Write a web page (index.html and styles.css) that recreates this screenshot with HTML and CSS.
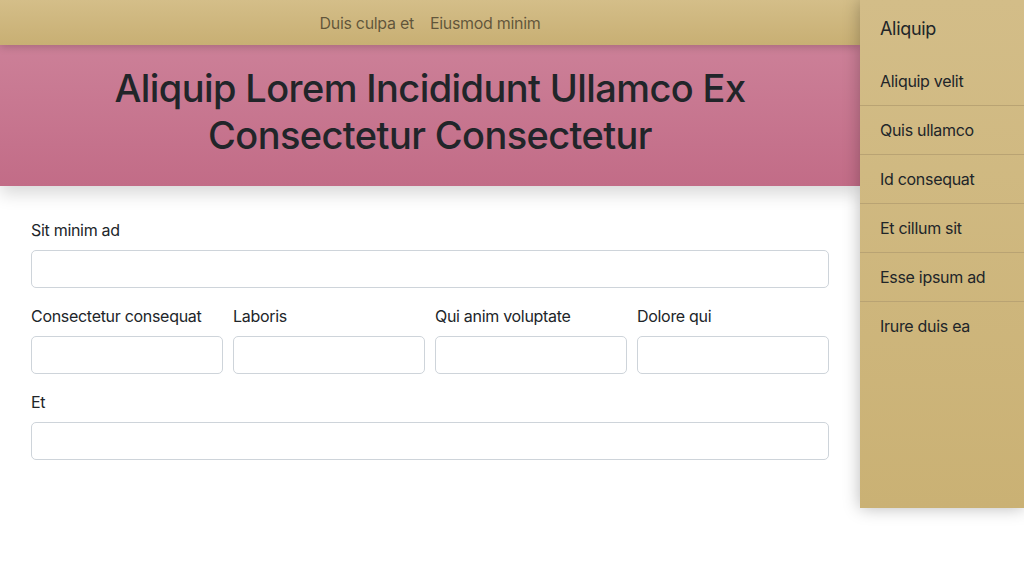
FILE: index.html
```html
<!DOCTYPE html>
<html lang="en">
<head>
<meta charset="utf-8">
<title>Aliquip</title>
<link rel="stylesheet" href="styles.css">
</head>
<body>
<div class="app">
  <div class="main">
    <nav class="topnav">
      <a class="topnav-link">Duis culpa et</a>
      <a class="topnav-link">Eiusmod minim</a>
    </nav>
    <header class="hero">
      <h1 class="hero-title">Aliquip Lorem Incididunt Ullamco Ex Consectetur Consectetur</h1>
    </header>
    <form class="form">
      <div class="field">
        <label class="label">Sit minim ad</label>
        <input class="input" type="text">
      </div>
      <div class="row">
        <div class="field">
          <label class="label">Consectetur consequat</label>
          <input class="input" type="text">
        </div>
        <div class="field">
          <label class="label">Laboris</label>
          <input class="input" type="text">
        </div>
        <div class="field">
          <label class="label">Qui anim voluptate</label>
          <input class="input" type="text">
        </div>
        <div class="field">
          <label class="label">Dolore qui</label>
          <input class="input" type="text">
        </div>
      </div>
      <div class="field">
        <label class="label">Et</label>
        <input class="input" type="text">
      </div>
    </form>
  </div>
  <aside class="sidebar">
    <div class="sidebar-title">Aliquip</div>
    <ul class="sidebar-list">
      <li class="sidebar-item">Aliquip velit</li>
      <li class="sidebar-item">Quis ullamco</li>
      <li class="sidebar-item">Id consequat</li>
      <li class="sidebar-item">Et cillum sit</li>
      <li class="sidebar-item">Esse ipsum ad</li>
      <li class="sidebar-item">Irure duis ea</li>
    </ul>
  </aside>
</div>
</body>
</html>
```

FILE: styles.css
```css
* { box-sizing: border-box; }
html, body { margin: 0; padding: 0; }
body {
  font-family: Inter, "Noto Sans", sans-serif;
  color: #212529;
  background: #fff;
  font-size: 16px;
  line-height: 1.5;
  letter-spacing: -0.3px;
}
.app {
  display: flex;
  align-items: flex-start;
  width: 1024px;
  height: 566px;
  overflow: hidden;
}
.main {
  flex: 0 0 860px;
  width: 860px;
}
.topnav {
  position: relative;
  z-index: 2;
  height: 45px;
  display: flex;
  justify-content: center;
  align-items: center;
  gap: 16px;
  background: linear-gradient(#d4be89, #c8af73);
  box-shadow: 0 2px 8px rgba(0, 0, 0, 0.18);
}
.topnav-link {
  color: rgba(0, 0, 0, 0.55);
  font-size: 16px;
}
.hero {
  position: relative;
  z-index: 1;
  height: 141px;
  padding-bottom: 8px;
  display: flex;
  align-items: center;
  justify-content: center;
  background: linear-gradient(#cc8098, #c26c87);
  box-shadow: 0 8px 16px rgba(0, 0, 0, 0.15);
}
.hero-title {
  margin: 0;
  max-width: 720px;
  text-align: center;
  font-size: 38px;
  font-weight: 500;
  letter-spacing: -0.6px;
  line-height: 47px;
  color: #212529;
}
.form {
  padding: 32px 31px 0;
  display: flex;
  flex-direction: column;
  gap: 16px;
}
.row {
  display: grid;
  grid-template-columns: repeat(4, 1fr);
  gap: 10px;
}
.field {
  display: flex;
  flex-direction: column;
  gap: 8px;
}
.label {
  font-size: 16px;
  line-height: 24px;
}
.input {
  height: 38px;
  width: 100%;
  border: 1px solid #ced4da;
  border-radius: 5px;
  background: #fff;
  font: inherit;
  padding: 6px 12px;
}
.sidebar {
  position: relative;
  z-index: 3;
  flex: 0 0 164px;
  height: 508px;
  background: linear-gradient(#d3bd88, #cab174);
  box-shadow: 0 0 16px rgba(0, 0, 0, 0.28);
}
.sidebar-title {
  height: 57px;
  padding: 16px 20px 0;
  font-size: 18px;
  line-height: 26px;
}
.sidebar-list {
  list-style: none;
  margin: 0;
  padding: 0;
}
.sidebar-item {
  padding: 12px 20px;
  line-height: 24px;
  font-size: 16px;
}
.sidebar-item + .sidebar-item {
  border-top: 1px solid #b9a373;
}
```
